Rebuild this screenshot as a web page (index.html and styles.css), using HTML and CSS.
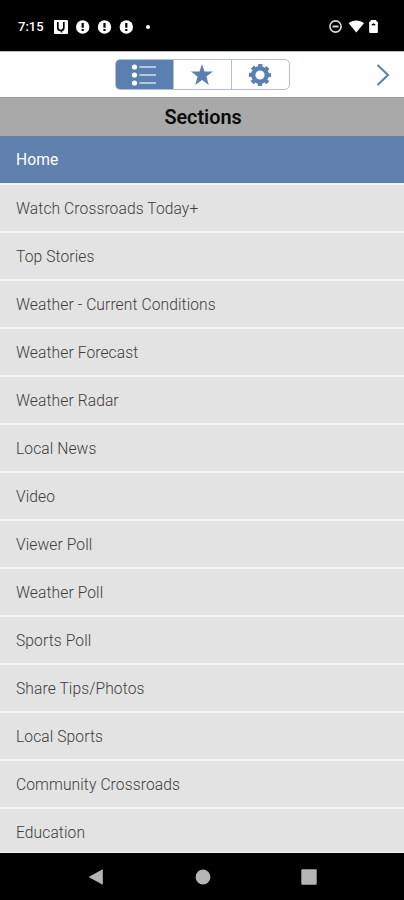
FILE: index.html
```html
<!DOCTYPE html>
<html lang="en">
<head>
    <meta charset="UTF-8">
    <meta name="viewport" content="width=device-width, initial-scale=1.0">
    <title>Sections</title>
    <link rel="stylesheet" href="styles.css">
</head>
<body>
    <!-- Status bar -->
    <div class="status-bar">
        <span class="time">7:15</span>
        <svg class="notifications" width="102" height="16" viewBox="0 0 102 16">
            <rect x="1" y="1" width="14" height="14" rx="1" fill="#fff"/>
            <path d="M4.800 3v5.500a3 3 0 0 0 6 0V3M8.500 11.500v2" fill="none" stroke="#000" stroke-width="1.700"/>
            <g fill="#fff">
                <circle cx="29.700" cy="8" r="6.700"/>
                <circle cx="51.500" cy="8" r="6.700"/>
                <circle cx="73.300" cy="8" r="6.700"/>
                <circle cx="95" cy="8" r="2"/>
            </g>
            <path d="M29.700 4v4.800M29.700 10v2M51.500 4v4.800M51.500 10v2M73.300 4v4.800M73.300 10v2" stroke="#000" stroke-width="2.200"/>
        </svg>
        <svg class="system" width="52" height="16" viewBox="0 0 52 16">
            <circle cx="7.500" cy="7.500" r="5.600" fill="none" stroke="#ddd" stroke-width="1.600"/>
            <path d="M4.500 7.500h6" stroke="#ddd" stroke-width="1.900"/>
            <path d="M20.700 4.200C25 .7 31.500 .7 36 4.200L28.300 13.500z" fill="#fff"/>
            <path d="M43 1.500h5v1.500h1.300v10.500h-7.600v-10.500h1.300z" fill="#fff" stroke="#fff" stroke-linejoin="round"/>
            <path d="M43.800 5.800L45.500 4.800l1.700 1z" fill="#000" stroke="#000" stroke-width="1"/>
        </svg>
    </div>

    <!-- Toolbar -->
    <header class="toolbar">
        <div class="tabs">
            <button class="tab active" aria-label="Sections">
                <svg width="26" height="22" viewBox="0 0 26 22">
                    <g fill="#fff">
                        <circle cx="3.500" cy="3" r="2.600"/>
                        <circle cx="3.500" cy="11" r="2.600"/>
                        <circle cx="3.500" cy="19" r="2.600"/>
                    </g>
                    <path d="M8.500 3H25M8.500 11H25M8.500 19H25" stroke="#d5dfec" stroke-width="1.600"/>
                </svg>
            </button>
            <button class="tab" aria-label="Favorites">
                <svg width="24" height="24" viewBox="0 0 24 24">
                    <path d="M12 1l2.500 7.600H23l-6.600 5 2.400 8.400L12 17l-6.800 5 2.400-8.400L1 8.600h8.500z" fill="#5b80b0"/>
                </svg>
            </button>
            <button class="tab" aria-label="Settings">
                <svg width="24" height="24" viewBox="0 0 24 24">
                    <circle cx="12" cy="12" r="6.800" fill="none" stroke="#5b80b0" stroke-width="4.400"/>
                    <circle cx="12" cy="12" r="9.500" fill="none" stroke="#5b80b0" stroke-width="3" stroke-dasharray="4.200 3.261" stroke-dashoffset="2.100"/>
                </svg>
            </button>
        </div>
        <svg class="next" width="14" height="24" viewBox="0 0 14 24">
            <path d="M1.500 2L12 12 1.500 22" fill="none" stroke="#5f84b3" stroke-width="2.200"/>
        </svg>
    </header>

    <h1>Sections</h1>
    <ul class="sections">
        <li class="selected">Home</li>
        <li>Watch Crossroads Today+</li>
        <li>Top Stories</li>
        <li>Weather - Current Conditions</li>
        <li>Weather Forecast</li>
        <li>Weather Radar</li>
        <li>Local News</li>
        <li>Video</li>
        <li>Viewer Poll</li>
        <li>Weather Poll</li>
        <li>Sports Poll</li>
        <li>Share Tips/Photos</li>
        <li>Local Sports</li>
        <li>Community Crossroads</li>
        <li>Education</li>
    </ul>

    <!-- System navigation -->
    <nav class="nav-bar">
        <svg width="16" height="16" viewBox="0 0 16 16"><path d="M.5 8L14.800 .3v15.400z" fill="#b5b5b5"/></svg>
        <svg width="16" height="16" viewBox="0 0 16 16"><circle cx="8" cy="8" r="7.400" fill="#b5b5b5"/></svg>
        <svg width="16" height="16" viewBox="0 0 16 16"><rect x=".3" y=".3" width="15.400" height="15.400" rx="1" fill="#b5b5b5"/></svg>
    </nav>
</body>
</html>
```
FILE: styles.css
```css
* {
    box-sizing: border-box;
}

body {
    margin: 0;
    height: 900px;
    display: flex;
    flex-direction: column;
    overflow: hidden;
    background-color: #000;
    font-family: Roboto, sans-serif;
}

svg {
    display: block;
}

/* Status bar */
.status-bar {
    flex: none;
    display: flex;
    align-items: center;
    height: 51px;
    padding: 2px 24px 0 18px;
    color: #fff;
}

.time {
    width: 35px;
    font-size: 13px;
    font-weight: 500;
}

.system {
    margin-left: auto;
}

/* Toolbar */
.toolbar {
    flex: none;
    display: flex;
    align-items: center;
    height: 46px;
    padding: 0 14px 0 115px;
    background-color: #fff;
    border-top: 1px solid #bbb;
}

.tabs {
    display: flex;
    width: 175px;
    height: 31px;
    border: 1px solid #b3bfd5;
    border-radius: 5px;
    overflow: hidden;
}

.tab {
    flex: 1;
    display: flex;
    align-items: center;
    justify-content: center;
    padding: 0 1px 0 0;
    border: none;
    border-left: 1px solid #b3bfd5;
    background: none;
}

.tab.active {
    border-left: none;
    background-color: #5b80b0;
}

.next {
    margin-left: auto;
}

/* Sections list */
h1 {
    flex: none;
    height: 39px;
    margin: 0;
    padding-left: 2px;
    background-color: #a9a9a9;
    border-top: 1px solid #9b9b9b;
    color: #0b0b0b;
    font-size: 19.8px;
    font-weight: 600;
    line-height: 39px;
    text-align: center;
}

.sections {
    flex: none;
    height: 717px;
    margin: 0;
    padding: 0;
    list-style: none;
    overflow: hidden;
    background-color: #e3e3e3;
    border-bottom: 1px solid #f3f3f3;
}

.sections li {
    height: 48px;
    padding-left: 16px;
    border-bottom: 2px solid #f1f1f1;
    color: #3c3c3c;
    font-size: 15.6px;
    font-weight: 350;
    line-height: 49px;
    letter-spacing: 0.1px;
}

.sections .selected {
    height: 49px;
    background-color: #6081ad;
    color: #fff;
    font-weight: 400;
}

/* System navigation */
.nav-bar {
    flex: 1;
    display: flex;
    justify-content: space-between;
    align-items: center;
    padding: 0 87px 0 88px;
}
```
